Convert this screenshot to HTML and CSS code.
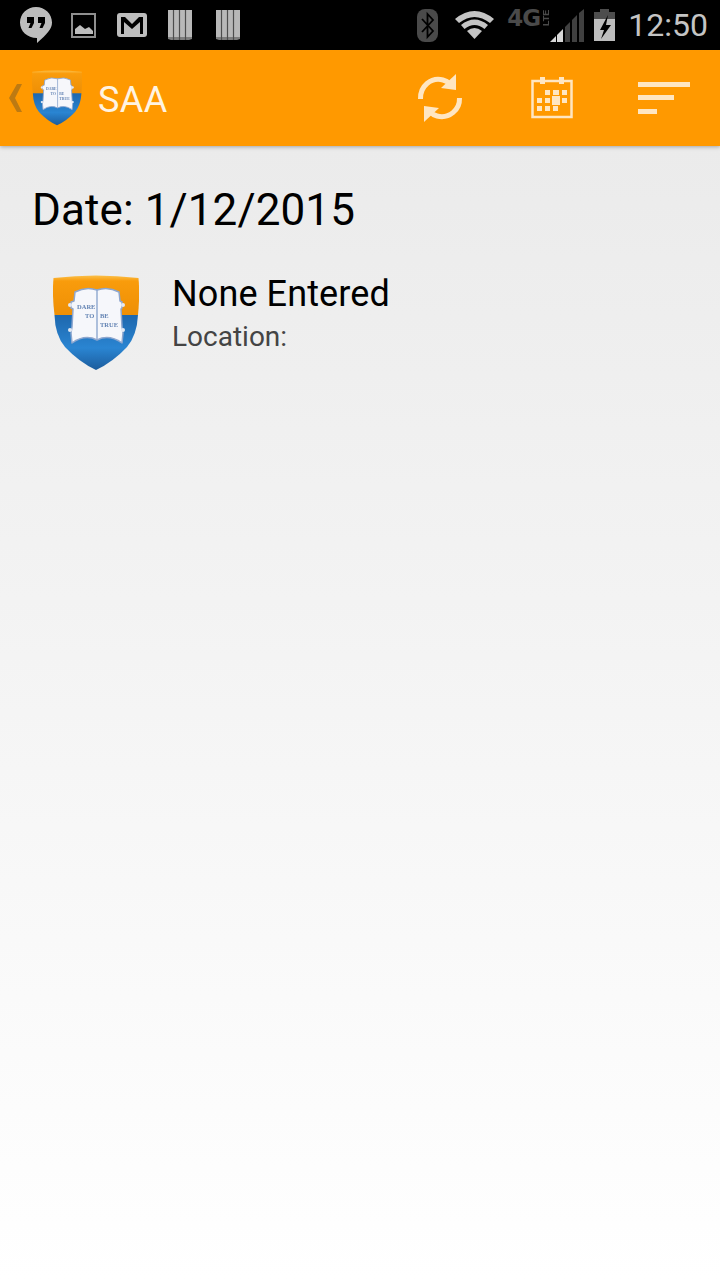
FILE: index.html
```html
<!DOCTYPE html>
<html lang="en">
<head>
<meta charset="utf-8">
<title>SAA</title>
<link rel="stylesheet" href="styles.css">
</head>
<body>
<svg class="defs" width="0" height="0" aria-hidden="true">
  <defs>
    <linearGradient id="rim" x1="0" y1="0" x2="0" y2="1">
      <stop offset="0" stop-color="#fbc04a"/>
      <stop offset="0.14" stop-color="#f99c0c"/>
      <stop offset="1" stop-color="#ee8f05"/>
    </linearGradient>
    <linearGradient id="blue" x1="0" y1="0" x2="0" y2="1">
      <stop offset="0" stop-color="#1e67ad"/>
      <stop offset="0.6" stop-color="#2a85d2"/>
      <stop offset="1" stop-color="#1c5c9c"/>
    </linearGradient>
    <symbol id="shield" viewBox="0 0 86 96">
      <path d="M0.500 3 Q43 -2 85.500 3 Q87 20 85 40 L1.500 40 Q-1 20 0.500 3Z" fill="url(#rim)"/>
      <path d="M1.500 40 L85 40 Q84 60 74 72 Q60 87 43 95 Q26 87 12 72 Q2 60 1.500 40Z" fill="url(#blue)"/>
      <path d="M22 17 Q33 11 44 15 Q55 11 66 17 L67 26 L69 27 L69 33 L68 34 L69 52 L70 58 L69 68 Q56 59 44 65 Q32 59 19 68 L18 58 L19 52 L20 34 L18 33 L18 27 L21 26Z" fill="#f6f7fb" stroke="#8ea7cf" stroke-width="1.500" stroke-linejoin="round"/>
      <path d="M44 15 V65" stroke="#8ea7cf" stroke-width="1.400" fill="none"/>
      <circle cx="17" cy="30" r="2" fill="#e3e9f4"/>
      <circle cx="70" cy="30" r="2" fill="#e3e9f4"/>
      <circle cx="17" cy="55" r="2" fill="#e3e9f4"/>
      <circle cx="70" cy="55" r="2" fill="#e3e9f4"/>
      <text x="24" y="34" class="motto">DARE</text>
      <text x="32" y="43" class="motto">TO</text>
      <text x="47" y="43" class="motto">BE</text>
      <text x="47" y="52" class="motto">TRUE</text>
    </symbol>
    <symbol id="bars" viewBox="0 0 24 30">
      <path d="M0 0 H24 V27 H0Z" fill="#b8b8b8"/>
      <path d="M0 27 H24 V29 L21 30 H3 L0 29Z" fill="#7d7d7d"/>
      <path d="M5.500 0 V30 M11.500 0 V30 M17.500 0 V30" stroke="#4c4c4c" stroke-width="1.200" fill="none"/>
    </symbol>
  </defs>
</svg>

<header class="status-bar">
  <div class="status-left">
    <svg class="ic-hangouts" viewBox="0 0 32 36"><path d="M16 0 C25 0 32 7 32 15.500 C32 22 27 27 17 36 V31 C7 31 0 24 0 15.500 C0 7 7 0 16 0Z" fill="#bdbdbd"/><path d="M7 10 H14 V16 L11.500 21 H8.500 L10.500 16 H7Z M18 10 H25 V16 L22.500 21 H19.500 L21.500 16 H18Z" fill="#000"/></svg>
    <svg class="ic-picture" viewBox="0 0 25 25"><rect x="1" y="1" width="23" height="23" fill="none" stroke="#8f8f8f" stroke-width="2"/><path d="M4 21 V16 L9 12 L14 16 L18 14 L22 18 V21Z" fill="#bdbdbd"/></svg>
    <svg class="ic-gmail" viewBox="0 0 30 24"><rect width="30" height="24" rx="3" fill="#bdbdbd"/><path d="M4 21 V4 H8 L15 11 L22 4 H26 V21 H23 V9 L15 16 L7 9 V21Z" fill="#000"/></svg>
    <svg class="ic-bars"><use href="#bars"/></svg>
    <svg class="ic-bars"><use href="#bars"/></svg>
  </div>
  <div class="status-right">
    <svg class="ic-bt" viewBox="0 0 21 33"><rect width="21" height="33" rx="8" fill="#4a4a4a"/><path d="M5 10 L16 22 L10.500 28 V5 L16 11 L5 23" fill="none" stroke="#000" stroke-width="1.800"/></svg>
    <svg class="ic-wifi" viewBox="0 0 39 28"><path d="M0 8 Q19.500 -8 39 8 L35 12 Q19.500 0 4 12Z" fill="#c4c4c4"/><path d="M6 14 Q19.500 3 33 14 L29.500 18 Q19.500 10 9.500 18Z" fill="#c4c4c4"/><path d="M12 20 Q19.500 14 27 20 L19.500 28Z" fill="#c4c4c4"/></svg>
    <div class="net">
      <span class="net-4g">4G</span>
      <span class="net-lte">LTE</span>
    </div>
    <svg class="ic-signal" viewBox="0 0 34 33"><path d="M0 33 L6 27 V33Z" fill="#d8d8d8"/><path d="M7 26 L13 20 V33 H7Z" fill="#d8d8d8"/><path d="M15 18 L20 13 V33 H15Z" fill="#404040"/><path d="M22 11 L27 6 V33 H22Z" fill="#404040"/><path d="M29 4 L34 0 V33 H29Z" fill="#404040"/></svg>
    <svg class="ic-battery" viewBox="0 0 21 32"><path d="M6 0 H15 V3 H21 V32 H0 V3 H6Z" fill="#4d4d4d"/><path d="M0 10 H21 V32 H0Z" fill="#bdbdbd"/><path d="M14 6 L6 21 H10 L7 30 L17 16 H12Z" fill="#000"/></svg>
    <span class="clock">12:50</span>
  </div>
</header>

<nav class="app-bar">
  <div class="brand">
    <svg class="back" viewBox="0 0 13 28"><path d="M8 0 H13 L6 14 L13 28 H8 L0 14Z" fill="#bd7a12"/></svg>
    <svg class="brand-logo"><use href="#shield"/></svg>
    <span class="brand-title">SAA</span>
  </div>
  <div class="actions">
    <svg class="ic-refresh" viewBox="0 0 46 48"><g fill="none" stroke="#ffe6c2" stroke-width="5"><path d="M3.500 25 C3 12 14 3 26 6 Q30 7 33 10"/><path d="M42.500 24 C43 36 32 45 20 42 Q16 41 13 38"/></g><path d="M39 0 V16 L24 14Z" fill="#ffe6c2"/><path d="M7 48 V32 L22 34Z" fill="#ffe6c2"/></svg>
    <svg class="ic-calendar" viewBox="0 0 44 44"><rect x="2.500" y="5" width="39" height="36" fill="none" stroke="#ffe6c2" stroke-width="2.500"/><rect x="10" y="1" width="5" height="7" fill="#ffe6c2"/><rect x="29" y="1" width="5" height="7" fill="#ffe6c2"/><path fill="#ffe6c2" d="M15 14h5v5h-5zM23 14h6v5h-6zM32 14h5v5h-5zM7 22h5v5H7zM15 22h5v5h-5zM22 20h8v9h-8zM32 22h5v5h-5zM7 30h5v5H7zM15 30h5v5h-5zM23 30h5v5h-5z"/></svg>
    <svg class="ic-sort" viewBox="0 0 52 32"><path fill="#ffe6c2" d="M0 0h52v5H0zM0 13h36v5H0zM0 27h19v5H0z"/></svg>
  </div>
</nav>

<main class="content">
  <h1 class="date">Date: 1/12/2015</h1>
  <article class="event">
    <svg class="event-logo"><use href="#shield"/></svg>
    <div class="event-text">
      <h2 class="event-title">None Entered</h2>
      <p class="event-location">Location:</p>
    </div>
  </article>
</main>
</body>
</html>
```

FILE: styles.css
```css
* {
  box-sizing: border-box;
  margin: 0;
  padding: 0;
}

html,
body {
  width: 720px;
  height: 1280px;
  overflow: hidden;
}

body {
  display: flex;
  flex-direction: column;
  font-family: Roboto, "Liberation Sans", sans-serif;
  background: #fff;
}

svg {
  display: block;
  flex: none;
}

.defs {
  position: absolute;
}

.motto {
  font-family: "Liberation Serif", serif;
  font-size: 6.5px;
  font-weight: 700;
  fill: #6484b4;
}

.status-bar {
  flex: none;
  height: 50px;
  background: #000;
  display: flex;
  justify-content: space-between;
  align-items: center;
  padding: 0 12px 0 20px;
}

.status-left,
.status-right {
  display: flex;
  align-items: center;
}

.ic-hangouts {
  width: 32px;
  height: 36px;
  margin-right: 19px;
}

.ic-picture {
  width: 25px;
  height: 25px;
  margin-right: 21px;
}

.ic-gmail {
  width: 30px;
  height: 24px;
  margin-right: 21px;
}

.ic-bars {
  width: 24px;
  height: 30px;
  margin-right: 24px;
}

.ic-bars:last-child {
  margin-right: 0;
}

.ic-bt {
  width: 21px;
  height: 33px;
  margin-right: 17px;
}

.ic-wifi {
  width: 39px;
  height: 28px;
  margin-right: 13px;
}

.net {
  width: 44px;
  height: 33px;
  display: flex;
  align-items: flex-start;
  color: #4a4a4a;
  font-weight: 700;
  margin-right: -1px;
}

.net-4g {
  font-family: "DejaVu Sans", sans-serif;
  font-size: 23px;
  line-height: 18px;
  letter-spacing: -1px;
  height: 18px;
  margin-right: 2px;
}

.net-lte {
  font-family: "Liberation Sans", sans-serif;
  font-size: 9px;
  line-height: 9px;
  width: 9px;
  writing-mode: vertical-rl;
  transform: rotate(180deg);
  height: 18px;
  text-align: center;
}

.ic-signal {
  width: 34px;
  height: 33px;
  margin-right: 10px;
}

.ic-battery {
  width: 21px;
  height: 32px;
  margin-right: 13px;
}

.clock {
  color: #c4c4c4;
  font-size: 32px;
  line-height: 50px;
}

.app-bar {
  flex: none;
  height: 96px;
  background: #ff9900;
  box-shadow: 0 1px 4px rgba(0, 0, 0, 0.3);
  display: flex;
  justify-content: space-between;
  align-items: center;
  padding: 0 30px 0 9px;
  position: relative;
}

.brand {
  display: flex;
  align-items: center;
}

.back {
  width: 13px;
  height: 28px;
  margin-right: 10px;
}

.brand-logo {
  width: 50px;
  height: 56px;
  margin-right: 16px;
  filter: blur(0.4px);
}

.brand-title {
  color: #fff4e3;
  font-size: 36px;
  line-height: 44px;
  letter-spacing: 0.4px;
  padding-top: 4px;
}

.actions {
  display: flex;
  align-items: center;
}

.ic-refresh {
  width: 46px;
  height: 48px;
  margin-right: 67px;
}

.ic-calendar {
  width: 44px;
  height: 44px;
  margin-right: 64px;
}

.ic-sort {
  width: 52px;
  height: 32px;
}

.content {
  flex: 1;
  background: linear-gradient(#ebebeb, #ffffff);
  padding: 36px 32px 0;
}

.date {
  font-size: 44px;
  line-height: 56px;
  font-weight: 400;
  letter-spacing: 0.1px;
  color: #000;
}

.event {
  display: flex;
  margin-top: 37px;
  padding-left: 21px;
  align-items: flex-start;
}

.event-logo {
  width: 86px;
  height: 96px;
  margin-right: 33px;
  filter: blur(0.6px);
}

.event-text {
  margin-top: -2px;
}

.event-title {
  font-size: 36px;
  line-height: 42px;
  font-weight: 400;
  letter-spacing: 0.1px;
  color: #000;
}

.event-location {
  font-size: 28px;
  line-height: 36px;
  margin-top: 4px;
  color: #444;
}
```
